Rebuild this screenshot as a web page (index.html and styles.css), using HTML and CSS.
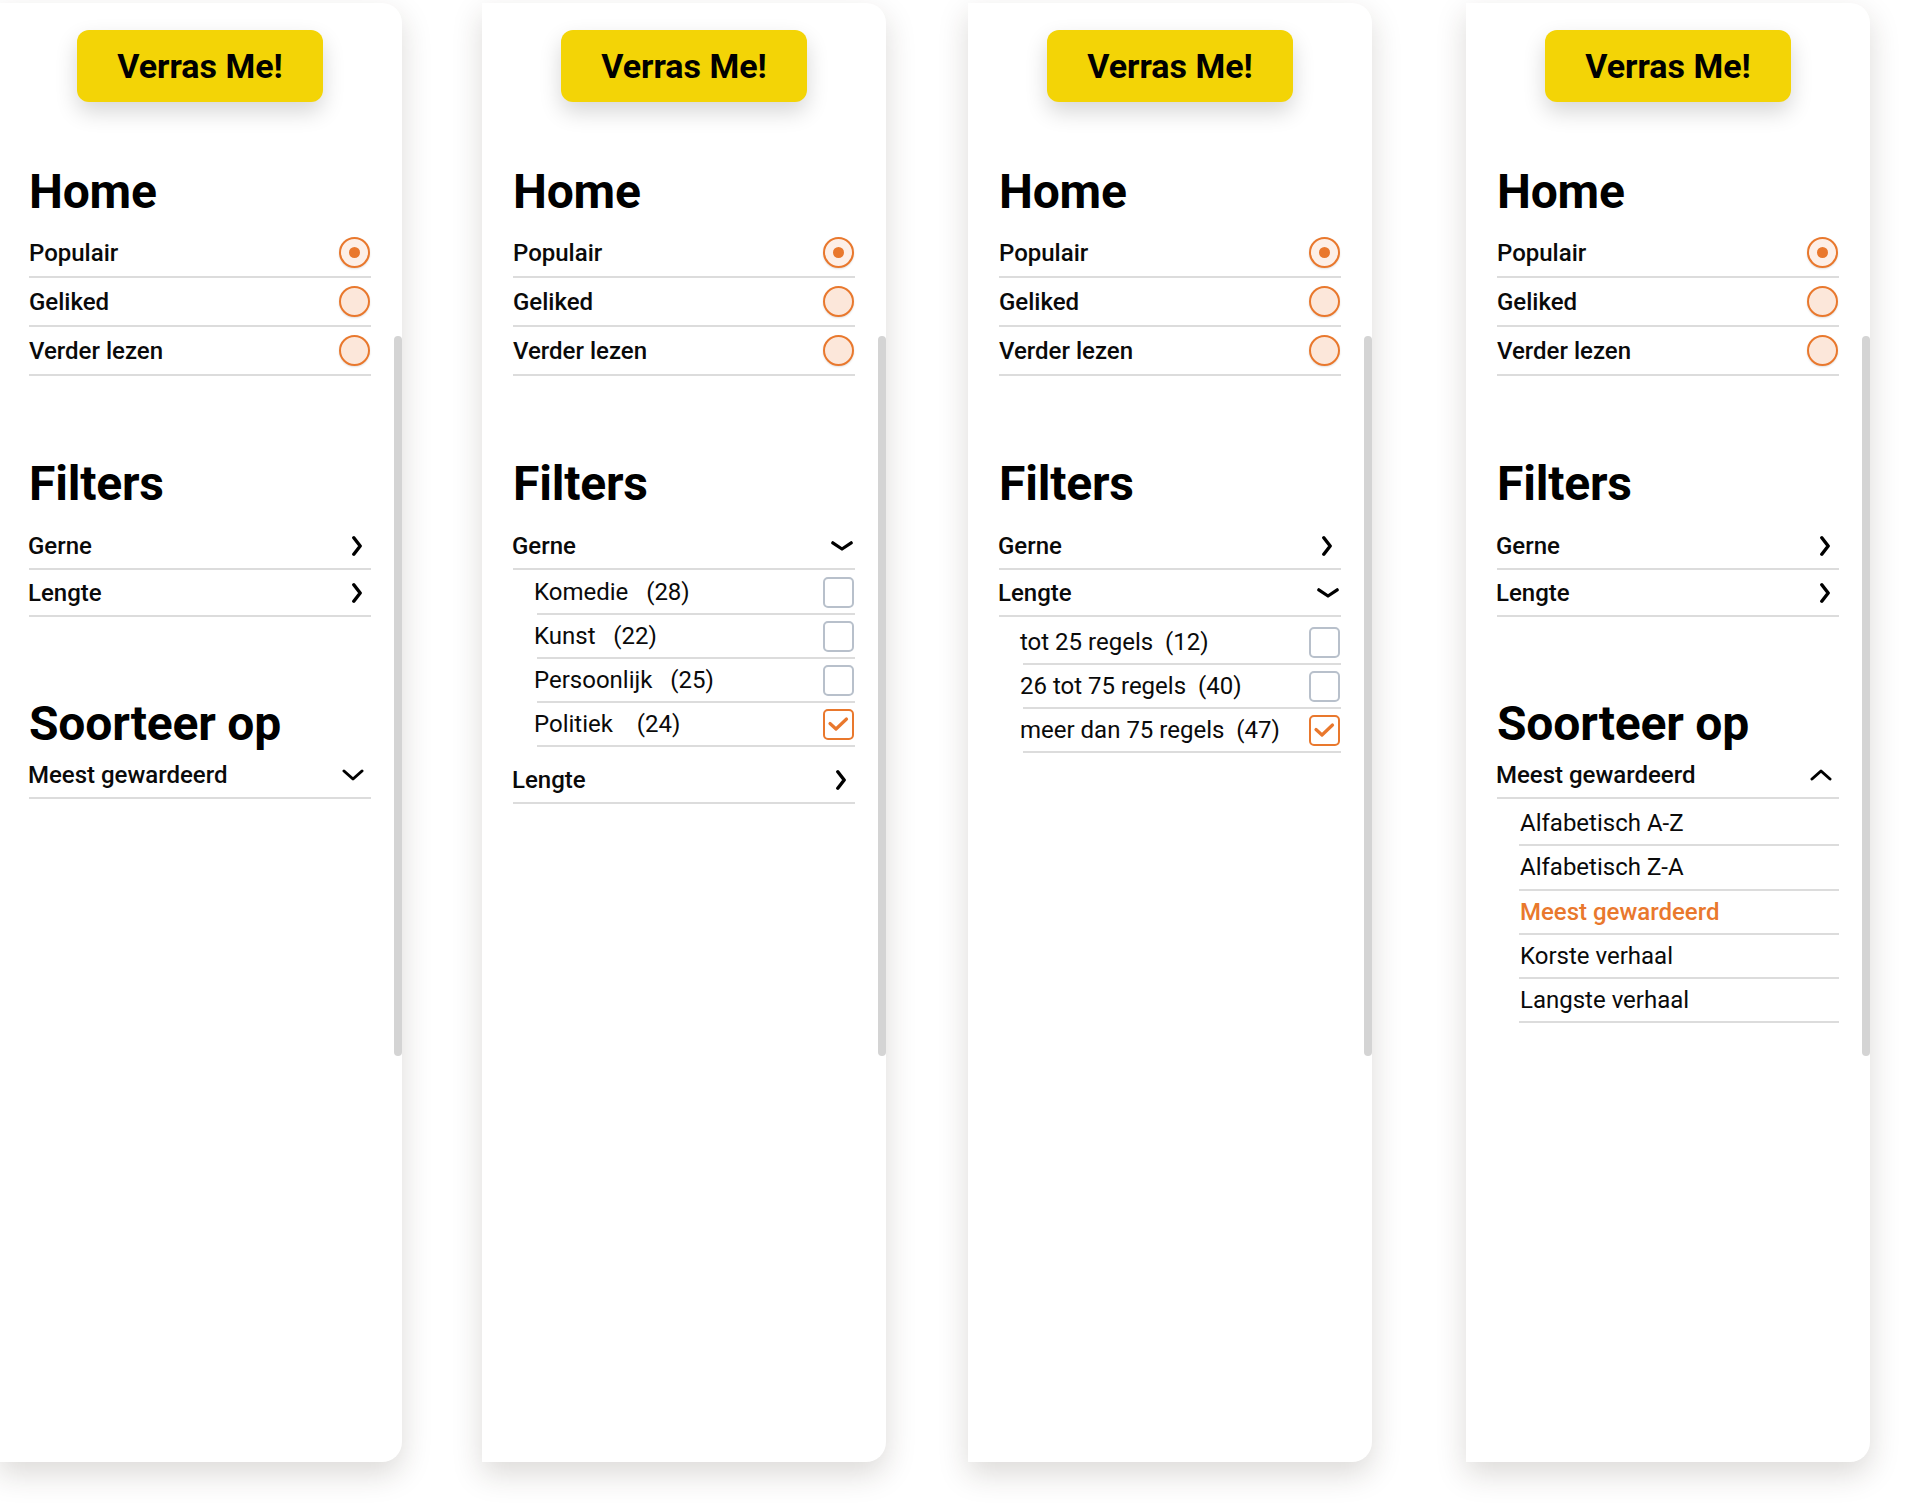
FILE: index.html
```html
<!DOCTYPE html>
<html lang="nl">
<head>
<meta charset="utf-8">
<title>Menu varianten</title>
<link rel="stylesheet" href="styles.css">
</head>
<body>
<div class="board">

  <!-- Panel 1 -->
  <section class="panel p1">
    <div class="btn-wrap"><button class="surprise">Verras Me!</button></div>
    <h2 class="heading h-home">Home</h2>
    <ul class="list radios">
      <li class="row radio-row"><span>Populair</span><span class="radio on"></span></li>
      <li class="row radio-row"><span>Geliked</span><span class="radio"></span></li>
      <li class="row radio-row"><span>Verder lezen</span><span class="radio"></span></li>
    </ul>
    <h2 class="heading h-filters">Filters</h2>
    <ul class="list">
      <li class="row frow"><span>Gerne</span><svg class="ic-right" viewBox="0 0 10 20"><path d="M1.8 1.8 L8.2 10 L1.8 18.2"/></svg></li>
      <li class="row frow"><span>Lengte</span><svg class="ic-right" viewBox="0 0 10 20"><path d="M1.8 1.8 L8.2 10 L1.8 18.2"/></svg></li>
    </ul>
    <h2 class="heading h-sort">Soorteer op</h2>
    <div class="row frow"><span>Meest gewardeerd</span><svg class="ic-sort" viewBox="0 0 22 12"><path d="M2 2 L11 10 L20 2"/></svg></div>
    <div class="scroll"></div>
  </section>

  <!-- Panel 2 -->
  <section class="panel p2">
    <div class="btn-wrap"><button class="surprise">Verras Me!</button></div>
    <h2 class="heading h-home">Home</h2>
    <ul class="list radios">
      <li class="row radio-row"><span>Populair</span><span class="radio on"></span></li>
      <li class="row radio-row"><span>Geliked</span><span class="radio"></span></li>
      <li class="row radio-row"><span>Verder lezen</span><span class="radio"></span></li>
    </ul>
    <h2 class="heading h-filters">Filters</h2>
    <ul class="list">
      <li class="row frow"><span>Gerne</span><svg class="ic-down" viewBox="0 0 22 10"><path d="M1.8 1.8 L11 8 L20.2 1.8"/></svg></li>
    </ul>
    <ul class="list sub sub-gerne">
      <li class="row srow"><span class="lbl">Komedie   (28)</span><span class="box"></span></li>
      <li class="row srow"><span class="lbl">Kunst   (22)</span><span class="box"></span></li>
      <li class="row srow"><span class="lbl">Persoonlijk   (25)</span><span class="box"></span></li>
      <li class="row srow"><span class="lbl">Politiek    (24)</span><span class="box on"><svg viewBox="0 0 31 31"><path d="M7 14.5 L13 20 L23.5 10"/></svg></span></li>
    </ul>
    <ul class="list after-sub">
      <li class="row frow"><span>Lengte</span><svg class="ic-right" viewBox="0 0 10 20"><path d="M1.8 1.8 L8.2 10 L1.8 18.2"/></svg></li>
    </ul>
    <div class="scroll"></div>
  </section>

  <!-- Panel 3 -->
  <section class="panel p3">
    <div class="btn-wrap"><button class="surprise">Verras Me!</button></div>
    <h2 class="heading h-home">Home</h2>
    <ul class="list radios">
      <li class="row radio-row"><span>Populair</span><span class="radio on"></span></li>
      <li class="row radio-row"><span>Geliked</span><span class="radio"></span></li>
      <li class="row radio-row"><span>Verder lezen</span><span class="radio"></span></li>
    </ul>
    <h2 class="heading h-filters">Filters</h2>
    <ul class="list">
      <li class="row frow"><span>Gerne</span><svg class="ic-right" viewBox="0 0 10 20"><path d="M1.8 1.8 L8.2 10 L1.8 18.2"/></svg></li>
      <li class="row frow"><span>Lengte</span><svg class="ic-down" viewBox="0 0 22 10"><path d="M1.8 1.8 L11 8 L20.2 1.8"/></svg></li>
    </ul>
    <ul class="list sub sub-lengte">
      <li class="row srow"><span class="lbl">tot 25 regels  (12)</span><span class="box"></span></li>
      <li class="row srow"><span class="lbl">26 tot 75 regels  (40)</span><span class="box"></span></li>
      <li class="row srow"><span class="lbl">meer dan 75 regels  (47)</span><span class="box on"><svg viewBox="0 0 31 31"><path d="M7 14.5 L13 20 L23.5 10"/></svg></span></li>
    </ul>
    <div class="scroll"></div>
  </section>

  <!-- Panel 4 -->
  <section class="panel p4">
    <div class="btn-wrap"><button class="surprise">Verras Me!</button></div>
    <h2 class="heading h-home">Home</h2>
    <ul class="list radios">
      <li class="row radio-row"><span>Populair</span><span class="radio on"></span></li>
      <li class="row radio-row"><span>Geliked</span><span class="radio"></span></li>
      <li class="row radio-row"><span>Verder lezen</span><span class="radio"></span></li>
    </ul>
    <h2 class="heading h-filters">Filters</h2>
    <ul class="list">
      <li class="row frow"><span>Gerne</span><svg class="ic-right" viewBox="0 0 10 20"><path d="M1.8 1.8 L8.2 10 L1.8 18.2"/></svg></li>
      <li class="row frow"><span>Lengte</span><svg class="ic-right" viewBox="0 0 10 20"><path d="M1.8 1.8 L8.2 10 L1.8 18.2"/></svg></li>
    </ul>
    <h2 class="heading h-sort">Soorteer op</h2>
    <div class="row frow"><span>Meest gewardeerd</span><svg class="ic-sort" viewBox="0 0 22 12"><path d="M2 10 L11 2 L20 10"/></svg></div>
    <ul class="list sub sub-sort">
      <li class="row orow">Alfabetisch A-Z</li>
      <li class="row orow">Alfabetisch Z-A</li>
      <li class="row orow active">Meest gewardeerd</li>
      <li class="row orow">Korste verhaal</li>
      <li class="row orow">Langste verhaal</li>
    </ul>
    <div class="scroll"></div>
  </section>

</div>
</body>
</html>
```
FILE: styles.css
```css
* { box-sizing: border-box; }

html, body {
  margin: 0;
  padding: 0;
  background: #ffffff;
}

body {
  font-family: Roboto, "Liberation Sans", Arial, sans-serif;
  color: #0a0a0a;
  width: 1912px;
  height: 1508px;
  overflow: hidden;
}

.board {
  display: flex;
  align-items: flex-start;
  padding-top: 3px;
}

.panel {
  position: relative;
  flex: 0 0 404px;
  width: 404px;
  height: 1459px;
  background: #ffffff;
  border-radius: 0 20px 20px 0;
  box-shadow: 0 12px 30px rgba(45, 35, 25, 0.17);
  padding: 27px 31px 0 31px;
}

.p1 { margin-left: -2px; }
.p2 { margin-left: 80px; }
.p3 { margin-left: 82px; }
.p4 { margin-left: 94px; }

.btn-wrap {
  display: flex;
  justify-content: center;
}

.surprise {
  width: 246px;
  height: 72px;
  border: none;
  border-radius: 12px;
  background: #f3d406;
  color: #000;
  font-family: Roboto, "Liberation Sans", Arial, sans-serif;
  font-weight: 700;
  font-size: 34px;
  letter-spacing: 0;
  box-shadow: 0 10px 22px rgba(0, 0, 0, 0.16);
  padding: 0;
}

.heading {
  margin: 0;
  font-size: 48px;
  line-height: 56px;
  font-weight: 700;
  color: #000;
  letter-spacing: -0.2px;
}

.h-home { margin-top: 62px; margin-bottom: 9px; }
.h-filters { margin-top: 80px; margin-bottom: 11px; }
.h-sort { margin-top: 79px; margin-bottom: 0; }

.list {
  list-style: none;
  margin: 0;
  padding: 0;
}

.row {
  display: flex;
  align-items: center;
  justify-content: space-between;
  border-bottom: 2px solid #dcdcdc;
  font-size: 24px;
  line-height: 28px;
}

.radio-row {
  height: 49px;
  font-weight: 500;
}

.frow {
  height: 47px;
  font-weight: 500;
}

.frow > span { margin-left: -1px; }

.radio {
  width: 31px;
  height: 31px;
  border-radius: 50%;
  border: 2px solid #e9782d;
  background: #fce7da;
  margin-right: 1px;
  display: flex;
  align-items: center;
  justify-content: center;
  box-shadow: 0 1px 2px rgba(0, 0, 0, 0.12);
}

.radio.on {
  background: #fdefe7;
}

.radio.on::after {
  content: "";
  width: 11px;
  height: 11px;
  border-radius: 50%;
  background: #e9782d;
}

.ic-right {
  width: 10px;
  height: 20px;
  margin-right: 9px;
  fill: none;
  stroke: #000;
  stroke-width: 3.4;
  stroke-linecap: round;
  stroke-linejoin: round;
}

.ic-down {
  width: 22px;
  height: 10px;
  margin-right: 2px;
  fill: none;
  stroke: #000;
  stroke-width: 3.2;
  stroke-linecap: round;
  stroke-linejoin: round;
}

.ic-sort {
  width: 22px;
  height: 12px;
  margin-right: 7px;
  fill: none;
  stroke: #000;
  stroke-width: 3;
  stroke-linecap: round;
  stroke-linejoin: round;
}

.sub {
  padding-left: 24px;
}

.sub-gerne { margin-top: 1px; }
.sub-lengte { margin-top: 4px; }
.sub-sort { margin-top: 3px; padding-left: 22px; }

.after-sub { margin-top: 10px; }

.srow {
  height: 44px;
  font-weight: 400;
}

.lbl {
  white-space: pre;
  margin-left: -3px;
}

.box {
  width: 31px;
  height: 31px;
  border: 2px solid #b8c0cb;
  border-radius: 5px;
  background: #fff;
  margin-right: 1px;
  display: flex;
}

.box.on {
  border-color: #e9782d;
}

.box svg {
  margin: -2px;
  width: 31px;
  height: 31px;
  flex: 0 0 31px;
  fill: none;
  stroke: #e9782d;
  stroke-width: 3.2;
  stroke-linecap: round;
  stroke-linejoin: round;
}

.orow {
  height: 44.3px;
  font-weight: 400;
  padding-left: 1px;
}

.orow.active {
  color: #e9782d;
  font-weight: 500;
}

.scroll {
  position: absolute;
  right: 0;
  top: 333px;
  width: 8px;
  height: 720px;
  border-radius: 4px;
  background: #d4d4d4;
}
```
